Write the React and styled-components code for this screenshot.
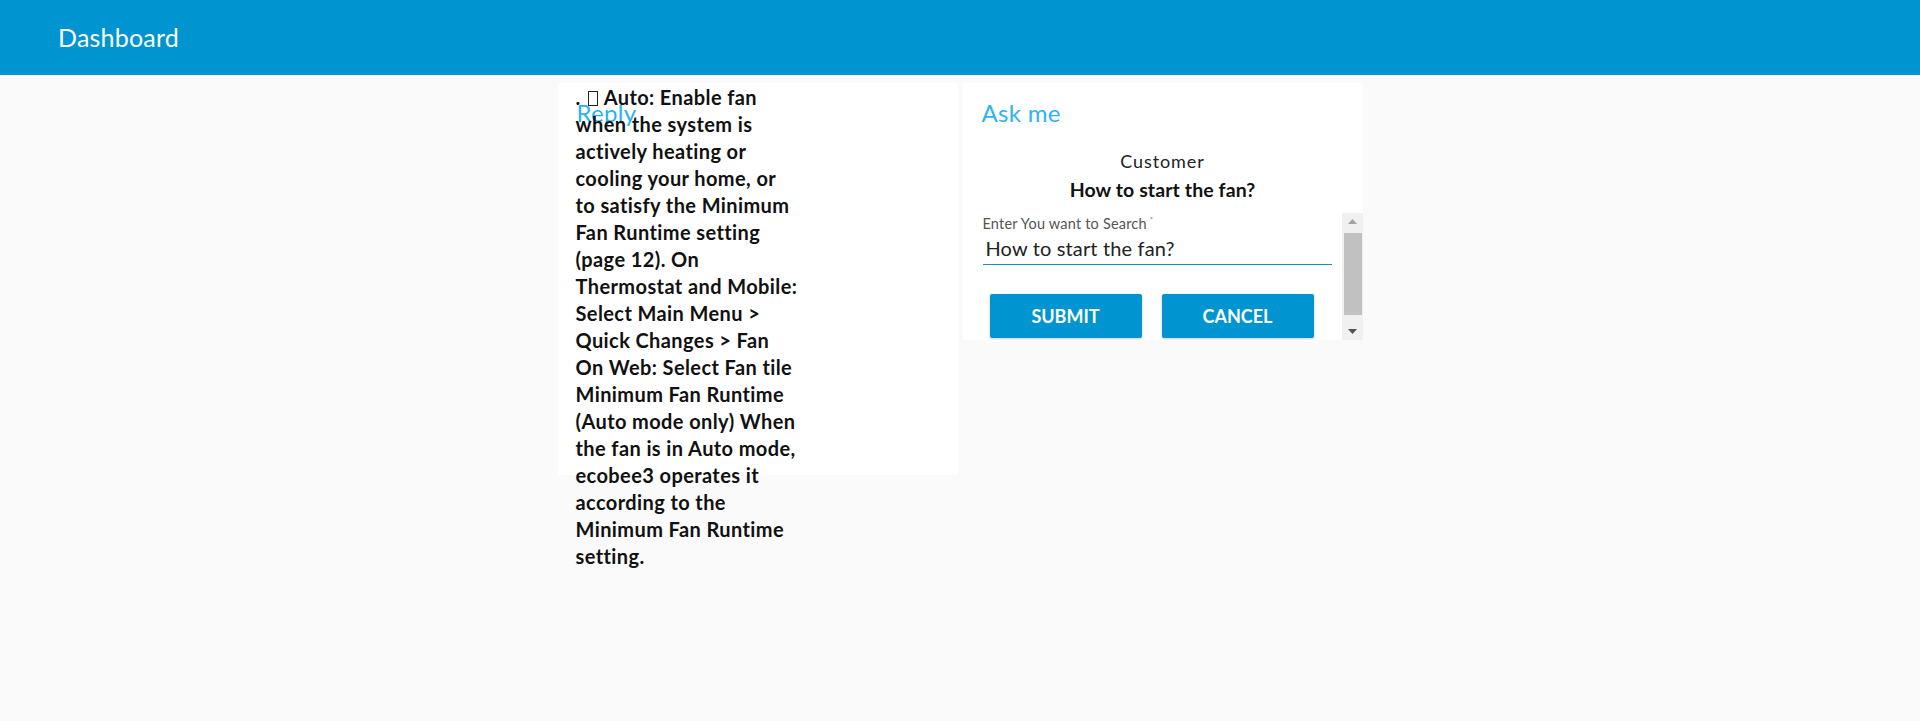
import React from "react";
import styled, { createGlobalStyle } from "styled-components";

const GlobalStyle = createGlobalStyle`
  html, body {
    margin: 0;
    padding: 0;
    background: #fafafa;
    font-family: Lato, "Open Sans", sans-serif;
  }
`;

const Header = styled.header`
  height: 75px;
  background: #0095d0;
  display: flex;
  align-items: center;
  padding-left: 58px;
  box-sizing: border-box;
`;

const Brand = styled.div`
  color: #ffffff;
  font-size: 25px;
  line-height: 1;
  letter-spacing: 0.2px;
`;

const Main = styled.main`
  display: flex;
  justify-content: center;
  align-items: flex-start;
  gap: 5px;
  padding-top: 8px;
`;

const LeftColumn = styled.div`
  width: 400px;
  display: grid;
  grid-template: auto / 1fr;
`;

const Panel = styled.section`
  grid-area: 1 / 1;
  width: 400px;
  box-sizing: border-box;
  background: #ffffff;
  height: ${(p) => (p.$height ? `${p.$height}px` : "auto")};
  display: flex;
  flex-direction: column;
`;

const CardTitle = styled.h5`
  margin: 0;
  padding: 14px 19px 0;
  font-size: 24px;
  line-height: 32px;
  font-weight: 400;
  color: #2db4ee;
  letter-spacing: 0.3px;
`;

const ReplyText = styled.div`
  grid-area: 1 / 1;
  align-self: start;
  margin: 1px 0 0 18px;
  font-size: 20px;
  line-height: 27px;
  font-weight: 700;
  color: #111111;
  white-space: nowrap;
  letter-spacing: 0.4px;
`;

const Tofu = styled.span`
  display: inline-block;
  width: 8px;
  height: 13px;
  border: 1px solid #222;
  margin: 0 6px 0 7px;
  vertical-align: -1px;
`;

const Customer = styled.div`
  margin-top: 19px;
  text-align: center;
  font-size: 18px;
  line-height: 26px;
  color: #222;
  letter-spacing: 0.9px;
`;

const Question = styled.div`
  margin-top: 1px;
  text-align: center;
  font-size: 19.5px;
  line-height: 30px;
  font-weight: 700;
  color: #111;
  letter-spacing: 0.1px;
`;

const ScrollArea = styled.div`
  margin-top: 8px;
  height: 127px;
  display: flex;
`;

const ScrollContent = styled.div`
  flex: 1;
  min-width: 0;
  overflow: hidden;
  padding: 0 10px 0 20px;
`;

const ScrollBar = styled.div`
  width: 21px;
  background: #f0f0f0;
  display: flex;
  flex-direction: column;
  align-items: stretch;
`;

const ArrowBtn = styled.div`
  height: 17px;
  display: flex;
  align-items: center;
  justify-content: center;
  svg {
    width: 9px;
    height: 5px;
  }
`;

const ThumbTrack = styled.div`
  flex: 1;
  padding: 3px 1px 8px 2px;
  display: flex;
`;

const Thumb = styled.div`
  flex: 1;
  background: #c1c1c1;
`;

const Field = styled.div`
  display: flex;
  flex-direction: column;
`;

const Label = styled.label`
  font-size: 14.5px;
  line-height: 15px;
  color: #555;
  letter-spacing: 0.2px;

  sup {
    font-size: 8px;
    color: #888;
    margin-left: 3px;
  }
`;

const Input = styled.input`
  font-family: inherit;
  font-size: 20px;
  height: 34px;
  box-sizing: border-box;
  padding: 2px 0 0 3px;
  border: none;
  border-bottom: 1px solid #1a8fb3;
  outline: none;
  color: #222;
  background: transparent;
  letter-spacing: 0.15px;
`;

const ButtonRow = styled.div`
  display: flex;
  gap: 20px;
  padding: 29px 0 18px 7px;
`;

const Button = styled.button`
  width: 152px;
  height: 44px;
  flex: none;
  border: none;
  border-radius: 2px;
  background: #0095d0;
  color: #ffffff;
  font-family: inherit;
  font-size: 18px;
  font-weight: 700;
  text-transform: uppercase;
  box-shadow: 0 1px 3px rgba(0, 0, 0, 0.2);
  cursor: pointer;
`;

const replyLines = [
  "when the system is",
  "actively heating or",
  "cooling your home, or",
  "to satisfy the Minimum",
  "Fan Runtime setting",
  "(page 12). On",
  "Thermostat and Mobile:",
  "Select Main Menu >",
  "Quick Changes > Fan",
  "On Web: Select Fan tile",
  "Minimum Fan Runtime",
  "(Auto mode only) When",
  "the fan is in Auto mode,",
  "ecobee3 operates it",
  "according to the",
  "Minimum Fan Runtime",
  "setting.",
];

export default function App() {
  return (
    <>
      <GlobalStyle />
      <Header>
        <Brand>Dashboard</Brand>
      </Header>
      <Main>
        <LeftColumn>
          <Panel $height={392}>
            <CardTitle>Reply</CardTitle>
          </Panel>
          <ReplyText>
            .<Tofu />Auto: Enable fan
            {replyLines.map((l, i) => (
              <React.Fragment key={i}>
                <br />
                {l}
              </React.Fragment>
            ))}
          </ReplyText>
        </LeftColumn>
        <Panel>
          <CardTitle>Ask me</CardTitle>
          <Customer>Customer</Customer>
          <Question>How to start the fan?</Question>
          <ScrollArea>
            <ScrollContent>
              <Field>
                <Label>
                  Enter You want to Search<sup>*</sup>
                </Label>
                <Input defaultValue="How to start the fan?" />
              </Field>
              <ButtonRow>
                <Button>Submit</Button>
                <Button>Cancel</Button>
              </ButtonRow>
            </ScrollContent>
            <ScrollBar>
              <ArrowBtn>
                <svg viewBox="0 0 9 5">
                  <path d="M4.5 0 L9 5 L0 5 Z" fill="#a3a3a3" />
                </svg>
              </ArrowBtn>
              <ThumbTrack>
                <Thumb />
              </ThumbTrack>
              <ArrowBtn>
                <svg viewBox="0 0 9 5">
                  <path d="M0 0 L9 0 L4.5 5 Z" fill="#505050" />
                </svg>
              </ArrowBtn>
            </ScrollBar>
          </ScrollArea>
        </Panel>
      </Main>
    </>
  );
}
